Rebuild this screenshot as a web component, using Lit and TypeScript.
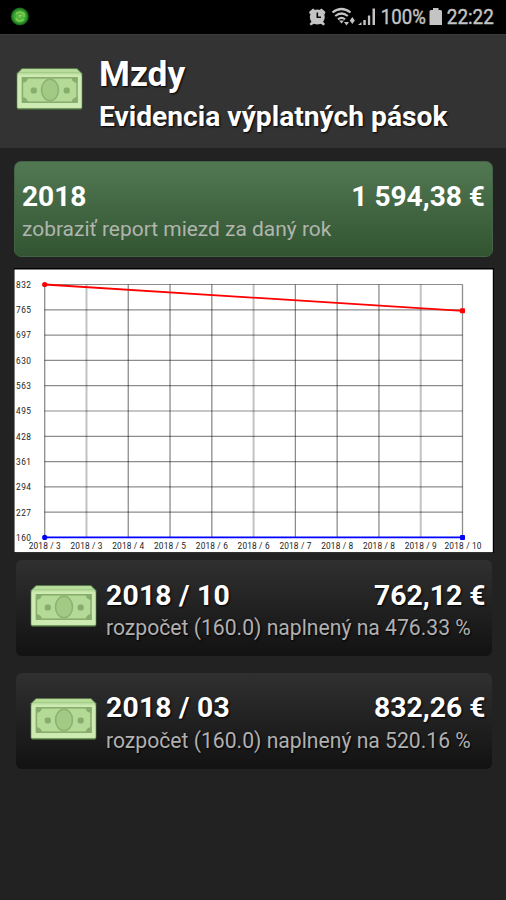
import { LitElement, html, svg, css } from "lit";
import { customElement, property } from "lit/decorators.js";

@customElement("money-icon")
class MoneyIcon extends LitElement {
  static styles = css`
    :host { display: block; width: 68px; height: 44px; flex: none; }
    svg { display: block; }
  `;
  render() {
    return html`<svg width="68" height="44" viewBox="0 0 68 44">
      <path d="M7 .5H62L67 5.500V39.500Q67 41 65.500 41H3.500Q2 41 2 39.500V5.500Z" fill="#a6cf8b" stroke="#557648" stroke-width=".8"/>
      <path d="M7.500 1.300H61.500L66 6V8.500H3V6Z" fill="#b7dc9c"/>
      <path d="M5 4.500H64" stroke="#a5cd8a" stroke-width="1"/>
      <rect x="2.500" y="6.500" width="64" height="33.500" rx="1.500" fill="#cceab1"/>
      <rect x="7.400" y="9.800" width="54.600" height="24.400" fill="#b5d996" stroke="#85ac6b" stroke-width="1.500"/>
      <g fill="#86ad6c">
        <path d="M7 9.500H13Q12.500 14.500 7 15ZM62.500 9.500H56.500Q57 14.500 62.500 15ZM7 34.500H13Q12.500 29.500 7 29ZM62.500 34.500H56.500Q57 29.500 62.500 29Z"/>
        <rect x="15.800" y="19.500" width="6" height="6" rx="2"/>
        <rect x="48.700" y="19.500" width="6" height="6" rx="2"/>
      </g>
      <ellipse cx="35" cy="22" rx="8.500" ry="10.800" fill="#a3ca85" stroke="#8ab270" stroke-width="1.500"/>
      <path d="M3 41H66.500" stroke="#567b45" stroke-width=".8"/>
    </svg>`;
  }
}

@customElement("salary-chart")
class SalaryChart extends LitElement {
  static styles = css`
    :host { display: block; }
    svg { display: block; }
    .tick { font: 8.300px Roboto, sans-serif; fill: #222; }
  `;
  render() {
    const ys = [832, 765, 697, 630, 563, 495, 428, 361, 294, 227, 160];
    const xs = ["3", "3", "4", "5", "6", "6", "7", "8", "8", "9", "10"];
    const light = [1, 5, 9];
    return html`<svg width="480" height="285" viewBox="14 268 480 285">
      <rect x="14" y="268" width="480" height="285" fill="#000"/>
      <rect x="14.500" y="269.500" width="478.300" height="282.700" fill="#fff"/>
      ${ys.map((v, i) => {
        const y = 284.5 + i * 25.3;
        return svg`<path d=${`M44.500 ${y}H462.500`} stroke="#000" stroke-opacity=".45" stroke-width="1.200"/>
          <text class="tick" x="16" y=${y + 3.3} textLength="15" lengthAdjust="spacing">${v}</text>`;
      })}
      ${xs.map((v, i) => {
        const x = 44.7 + i * 41.78;
        const wide = v.length > 1;
        return svg`<path d=${`M${x} 284.500V537.500`} stroke="#000" stroke-opacity=${light.includes(i) ? ".24" : ".45"} stroke-width=${light.includes(i) ? "2" : "1.300"}/>
          <text class="tick" x=${x - (wide ? 18 : 16)} y="548.500" textLength=${wide ? 37 : 32} lengthAdjust="spacing">2018 / ${v}</text>`;
      })}
      <path d="M44.700 284.500L462.500 310.800" stroke="#f00" stroke-width="1.800"/>
      <circle cx="44.700" cy="284.500" r="2.600" fill="#f00"/>
      <rect x="460" y="308.300" width="5" height="5" rx="1" fill="#f00"/>
      <path d="M44.700 537.400H462.500" stroke="#00f" stroke-width="1.900"/>
      <circle cx="44.700" cy="537.400" r="2.600" fill="#00f"/>
      <rect x="460" y="534.900" width="5" height="5" rx="1" fill="#00f"/>
    </svg>`;
  }
}

@customElement("salary-row")
class SalaryRow extends LitElement {
  @property() heading = "";
  @property() amount = "";
  @property() note = "";
  static styles = css`
    :host { display: flex; box-sizing: border-box; height: 96px; margin: 0 14.500px 0 16px; padding: 19.500px 6px 0 13px; border-radius: 6px;
      background: linear-gradient(#303030, #121212); gap: 9px; }
    money-icon { margin-top: 5.500px; }
    .body { flex: 1; white-space: nowrap; text-shadow: 1px 1px 2px #000; }
    .top { display: flex; justify-content: space-between; font-weight: 700; font-size: 28.300px; line-height: 32px; color: #fff; }
    .heading { letter-spacing: .22px; }
    .note { font-size: 21.150px; line-height: 26px; margin-top: 3.500px; color: #b0b0b0; }
  `;
  render() {
    return html`<money-icon></money-icon>
      <div class="body">
        <div class="top"><span class="heading">${this.heading}</span><span>${this.amount}</span></div>
        <div class="note">${this.note}</div>
      </div>`;
  }
}

@customElement("app-root")
class AppRoot extends LitElement {
  static styles = css`
    :host { display: flex; flex-direction: column; width: 506px; height: 900px; overflow: hidden; background: #222; font-family: Roboto, sans-serif; }
    .status { height: 34px; flex: none; background: #000; }
    .status svg { display: block; }
    .clock { font: 400 19.500px Roboto, sans-serif; fill: #c4c4c4; stroke: #c4c4c4; stroke-width: .4px; }
    .header { box-sizing: border-box; height: 114px; flex: none; display: flex; gap: 16px; padding: 20px 0 0 15px; background: #333; border-top: 1px solid #3b3b3b; color: #fff; font-weight: 700; white-space: nowrap; text-shadow: 1px 1px 2px #000; }
    .header money-icon { margin-top: 12.500px; }
    .title { font-size: 35.300px; line-height: 38px; }
    .subtitle { font-size: 28.200px; line-height: 34px; margin-top: 7px; }
    .year { box-sizing: border-box; height: 96px; flex: none; margin: 13px 13px 0 14px; padding: 19px 7px 0 7px; border: 1px solid #426345; border-radius: 7px; background: linear-gradient(#527853, #325431); white-space: nowrap; }
    .top { display: flex; justify-content: space-between; font-weight: 700; font-size: 28.100px; line-height: 32px; color: #fff; }
    .note { font-size: 20.950px; line-height: 26px; margin-top: 3px; color: #b0b5af; }
    salary-chart { margin: 11px 0 0 14px; }
    .list { display: flex; flex-direction: column; gap: 16.500px; margin-top: 7px; }
  `;
  render() {
    return html`
      <div class="status"><svg width="506" height="34" viewBox="0 0 506 34">
        <defs><radialGradient id="orb"><stop offset="0" stop-color="#67c849"/><stop offset=".65" stop-color="#38a834"/><stop offset="1" stop-color="#0f5a10"/></radialGradient></defs>
        <circle cx="19.800" cy="16.500" r="9" fill="url(#orb)"/>
        <path d="M16 14Q19 11 24 13.500V17M16 18Q17 22 22 20.500L24 19M19 16L22 15" fill="none" stroke="#a1d45c" stroke-opacity=".75" stroke-width="1.500"/>
        <g fill="#c4c4c4">
          <circle cx="317.300" cy="17" r="7.500"/>
          <path d="M309 12L313 8.500L315 10L310 14.500ZM325.500 12L321.500 8.500L319.500 10L324.500 14.500ZM312 21L309.500 24L311 25.500L315 23ZM322.500 21L325 24L323.500 25.500L319.500 23Z"/>
        </g>
        <path d="M317.300 12.500V17.300H321" fill="none" stroke="#080808" stroke-width="1.600"/>
        <g fill="none" stroke="#c4c4c4" stroke-width="2.200">
          <path d="M332.500 12.500Q341.500 5.500 350.500 12.500M335.200 16Q341.500 11 347.800 16M338 19.300Q341.500 16.500 345 19.300"/>
        </g>
        <path d="M339 20.500H344L341.500 23.500ZM344 22H349L346.500 25.500ZM349.800 20.500L352.300 17L354.800 20.500L352.300 24Z" fill="#c4c4c4"/>
        <path d="M358 25L361.500 22V25ZM363.300 20H365.800V25H363.300ZM367.900 15.500H370.200V25H367.900ZM372.500 8.500H375V25H372.500Z" fill="#c4c4c4"/>
        <text class="clock" x="380.800" y="24.200" textLength="45" lengthAdjust="spacingAndGlyphs">100%</text>
        <path d="M433 8H438.500V10H440.500Q442 10 442 11.500V25H429.500V11.500Q429.500 10 431 10H433Z" fill="#c4c4c4"/>
        <text class="clock" x="446.800" y="24.200" textLength="47" lengthAdjust="spacingAndGlyphs">22:22</text>
      </svg></div>
      <div class="header">
        <money-icon></money-icon>
        <div><div class="title">Mzdy</div><div class="subtitle">Evidencia výplatných pások</div></div>
      </div>
      <div class="year">
        <div class="top"><span>2018</span><span>1 594,38 €</span></div>
        <div class="note">zobraziť report miezd za daný rok</div>
      </div>
      <salary-chart></salary-chart>
      <div class="list">
        <salary-row heading="2018 / 10" amount="762,12 €" note="rozpočet (160.0) naplnený na 476.33 %"></salary-row>
        <salary-row heading="2018 / 03" amount="832,26 €" note="rozpočet (160.0) naplnený na 520.16 %"></salary-row>
      </div>`;
  }
}
